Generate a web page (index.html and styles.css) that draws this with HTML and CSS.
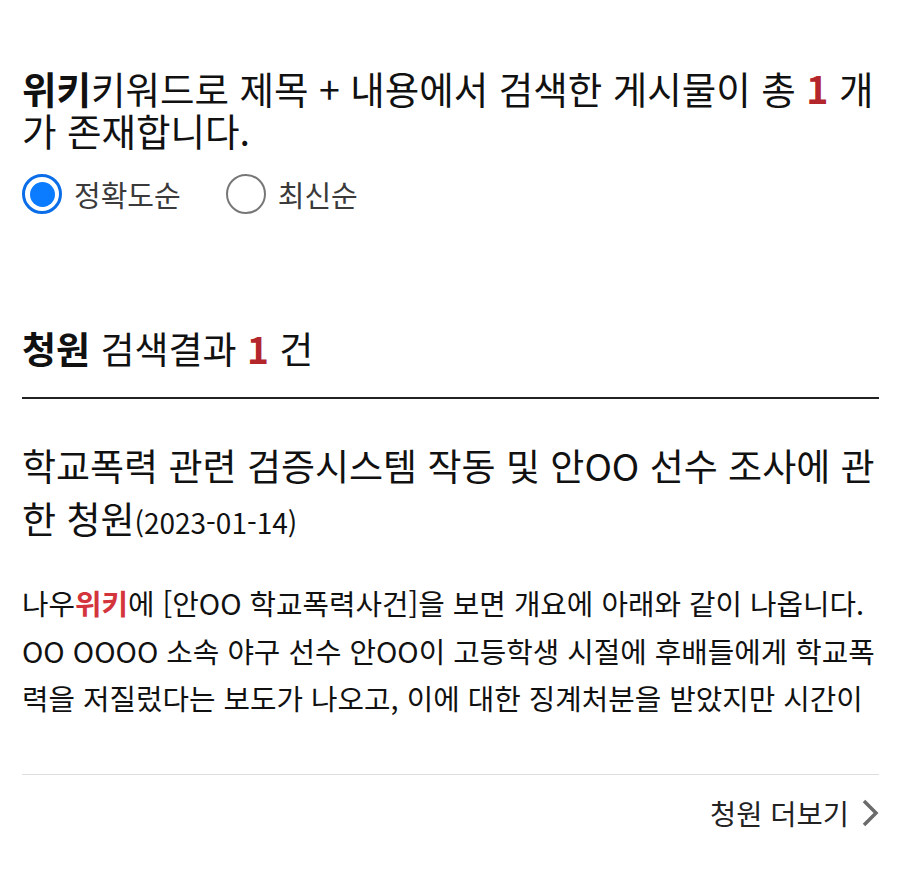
FILE: index.html
```html
<!DOCTYPE html>
<html lang="ko">
<head>
    <meta charset="UTF-8">
    <meta name="viewport" content="width=device-width, initial-scale=1.0">
    <title>검색결과</title>
    <link rel="stylesheet" href="styles.css">
</head>
<body>
    <div class="search-summary">
        <h2 class="summary-text"><b>위키</b>키워드로 제목 + 내용에서 검색한 게시물이 총 <em class="count">1</em> 개가 존재합니다.</h2>
        <div class="sort-options">
            <label class="radio-item">
                <span class="radio checked"></span>
                <span>정확도순</span>
            </label>
            <label class="radio-item">
                <span class="radio"></span>
                <span>최신순</span>
            </label>
        </div>
    </div>

    <section class="result-section">
        <h2 class="section-title"><b>청원</b> 검색결과 <em class="count">1</em> 건</h2>
        <div class="result-item">
            <h3 class="item-title">학교폭력 관련 검증시스템 작동 및 안OO 선수 조사에 관한 청원<span class="item-date">(2023-01-14)</span></h3>
            <p class="item-body">나우<span class="highlight">위키</span>에 [안OO 학교폭력사건]을 보면 개요에 아래와 같이 나옵니다. OO OOOO 소속 야구 선수 안OO이 고등학생 시절에 후배들에게 학교폭력을 저질렀다는 보도가 나오고, 이에 대한 징계처분을 받았지만 시간이</p>
        </div>
        <div class="more-row">
            <a href="#" class="more-link">청원 더보기
                <svg class="chevron" width="18" height="30" viewBox="0 0 18 30">
                    <polyline points="3,3 15,15 3,27" fill="none" stroke="#6b6b6b" stroke-width="3.5"/>
                </svg>
            </a>
        </div>
    </section>
</body>
</html>
```

FILE: styles.css
```css
* {
    box-sizing: border-box;
}

body {
    margin: 0;
    padding: 67px 21px 40px 22px;
    background: #fff;
    color: #111;
    font-family: "Noto Sans CJK KR", "Noto Sans", sans-serif;
    word-break: break-all;
}

h2, h3, p {
    margin: 0;
}

em {
    font-style: normal;
}

.count {
    color: #b3262c;
    font-weight: 700;
}

.summary-text {
    font-size: 37.5px;
    line-height: 42px;
    font-weight: 400;
}

.summary-text b {
    font-weight: 700;
}

.sort-options {
    display: flex;
    gap: 45px;
    margin-top: 22px;
}

.radio-item {
    display: flex;
    align-items: center;
    gap: 12px;
    font-size: 29px;
    color: #3a3a3a;
}

.radio {
    width: 40px;
    height: 40px;
    border-radius: 50%;
    border: 2px solid #777;
    display: flex;
    align-items: center;
    justify-content: center;
}

.radio.checked {
    border: 3px solid #0b6ee8;
}

.radio.checked::after {
    content: "";
    width: 25px;
    height: 25px;
    border-radius: 50%;
    background: #0b7bff;
}

.result-section {
    margin-top: 112px;
}

.section-title {
    font-size: 37px;
    line-height: 42px;
    font-weight: 400;
    padding-bottom: 28px;
    border-bottom: 2px solid #222;
}

.section-title b {
    font-weight: 700;
}

.result-item {
    padding: 40px 0 52px;
    border-bottom: 1px solid #ddd;
}

.item-title {
    font-size: 37px;
    line-height: 53px;
    font-weight: 400;
}

.item-date {
    font-size: 28px;
}

.item-body {
    margin-top: 30px;
    font-size: 28.8px;
    line-height: 47.5px;
}

.highlight {
    color: #d4343b;
    font-weight: 700;
}

.more-row {
    display: flex;
    justify-content: flex-end;
    padding-top: 18px;
}

.more-link {
    display: flex;
    align-items: center;
    gap: 12px;
    font-size: 28.5px;
    line-height: 40px;
    color: #222;
    text-decoration: none;
}
```
